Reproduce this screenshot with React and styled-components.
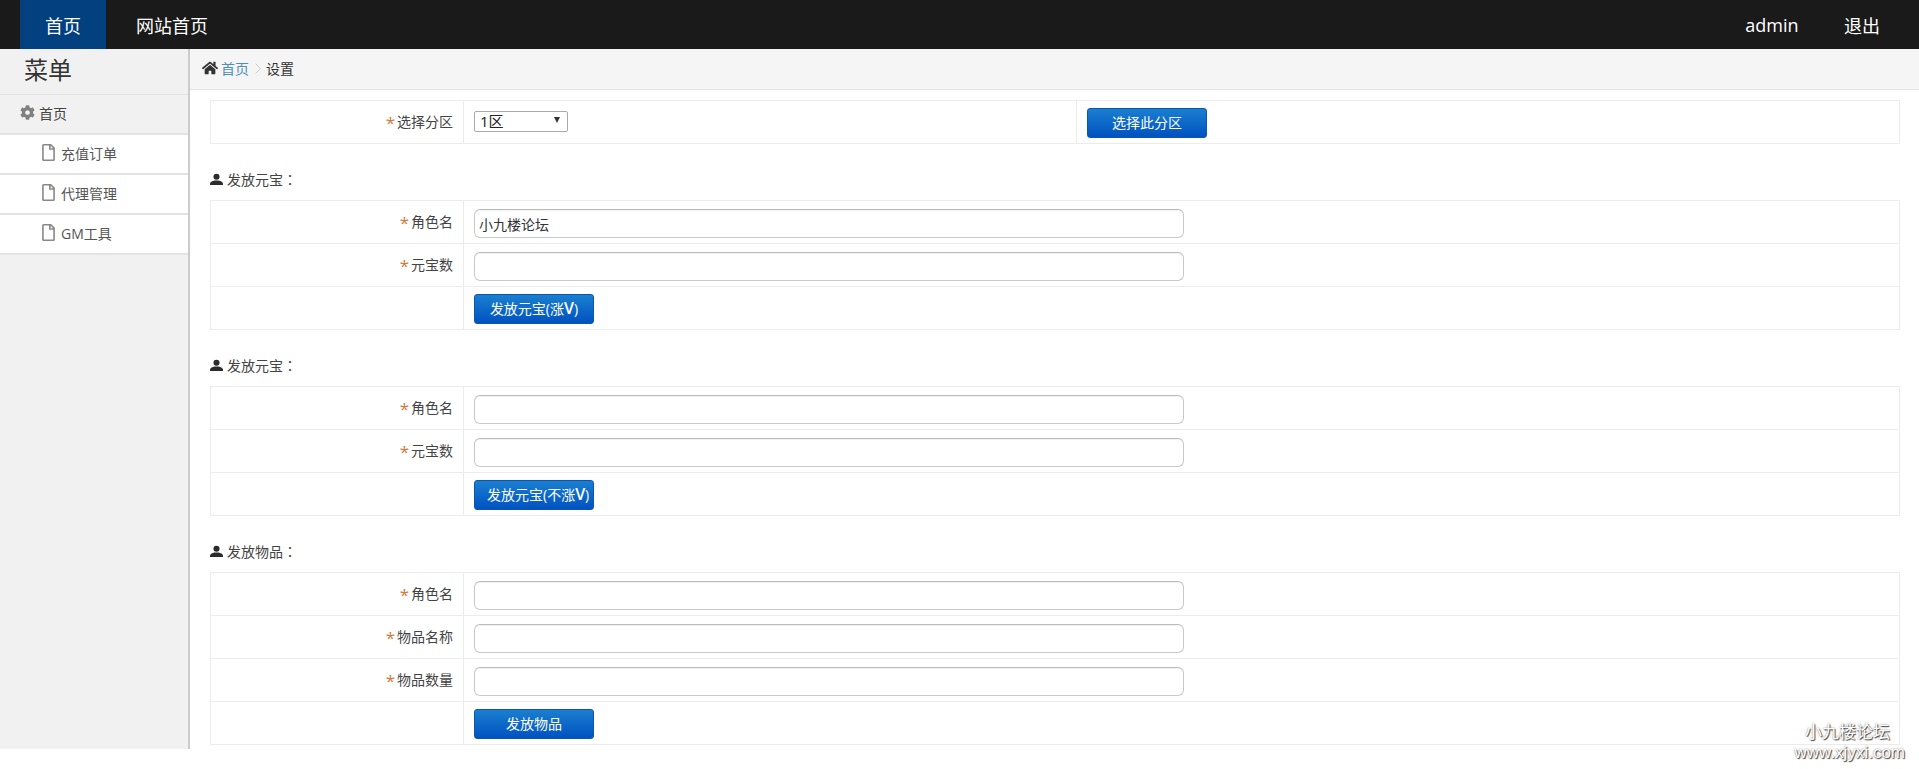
import styled, { createGlobalStyle } from "styled-components";
import { FaCog, FaHome, FaRegFile } from "react-icons/fa";

const cjk = `"Open Sans", "Noto Sans CJK SC", sans-serif`;

const GlobalStyle = createGlobalStyle`
  html, body {
    margin: 0;
    padding: 0;
    background: #fff;
    overflow: hidden;
  }
  * {
    box-sizing: border-box;
  }
  body {
    font-family: ${cjk};
    font-size: 14px;
    color: #333;
  }
`;

const Page = styled.div`
  position: relative;
  width: 1919px;
  height: 769px;
  overflow: hidden;
`;

const TopBar = styled.header`
  display: flex;
  align-items: stretch;
  height: 49px;
  padding: 0 39px 0 20px;
  background: #1a1a1a;
`;

const NavItem = styled.a`
  display: flex;
  align-items: center;
  justify-content: center;
  width: ${(p) => p.$width}px;
  margin-left: ${(p) => p.$gap || 0}px;
  background: ${(p) => (p.$active ? "#03407f" : "transparent")};
  color: #fff;
  font-size: 18px;
`;

const Spacer = styled.div`
  flex: 1;
`;

const Body = styled.div`
  display: flex;
  align-items: flex-start;
`;

const Sidebar = styled.aside`
  flex: none;
  width: 190px;
  height: 700px;
  background: #f1f1f1;
  border-right: 2px solid #ccc;
`;

const MenuTitle = styled.h2`
  height: 46px;
  margin: 0;
  padding-left: 24px;
  border-bottom: 1px solid #e2e2e2;
  font-size: 24px;
  font-weight: 400;
  line-height: 42px;
  color: #333;
`;

const MenuHead = styled.div`
  display: flex;
  align-items: center;
  gap: 4px;
  height: 40px;
  padding: 0 0 3px 20px;
  border-bottom: 2px solid #e3e3e3;
  color: #444;
  svg {
    font-size: 15px;
    color: #808080;
  }
`;

const MenuItem = styled.a`
  display: flex;
  align-items: center;
  gap: 4px;
  height: 40px;
  padding: 0 0 3px 40px;
  background: #fff;
  border-bottom: 2px solid #e3e3e3;
  color: #555;
  svg {
    font-size: 17px;
    color: #888;
  }
`;

const Main = styled.main`
  flex: 1;
  min-width: 0;
`;

const Crumbs = styled.nav`
  display: flex;
  align-items: center;
  height: 41px;
  padding: 0 0 2px 12px;
  background: #f5f5f5;
  border-bottom: 1px solid #e4e4e4;
  color: #333;
  > svg:first-child {
    font-size: 16px;
    color: #333;
    margin-right: 3px;
  }
`;

const CrumbLink = styled.a`
  color: #4d8fb8;
`;

const CrumbSep = styled.svg`
  width: 6px;
  height: 11px;
  margin: 0 5px 0 6px;
  fill: none;
  stroke: #ccc;
`;

const Content = styled.div`
  padding: 10px 19px 0 20px;
`;

const Table = styled.div`
  background: #fff;
  border: 1px solid #ececec;
`;

const Row = styled.div`
  display: grid;
  grid-template-columns: ${(p) => (p.$triple ? "253px 612px 1fr" : "253px 1fr")};
  height: 42px;
  & + & {
    height: 43px;
    border-top: 1px solid #ececec;
  }
`;

const LabelCell = styled.div`
  display: flex;
  align-items: center;
  justify-content: flex-end;
  gap: 2px;
  padding: 0 10px 2px 0;
  border-right: 1px solid #ececec;
  color: #444;
`;

const Star = styled.span`
  color: #d2793a;
  font-size: 17px;
  line-height: 1;
  padding-top: 3px;
`;

const FieldCell = styled.div`
  display: flex;
  align-items: center;
  padding: 2px 0 0 10px;
  & + & {
    border-left: 1px solid #ececec;
  }
`;

const Select = styled.div`
  display: flex;
  align-items: center;
  justify-content: space-between;
  width: 94px;
  height: 21px;
  padding: 0 7px 0 5px;
  background: #fff;
  border: 1px solid #aaa;
  border-radius: 2px;
  color: #222;
  font-size: 15px;
  line-height: 17px;
  margin-bottom: 3px;
`;

const Caret = styled.span`
  width: 0;
  height: 0;
  border-left: 3.5px solid transparent;
  border-right: 3.5px solid transparent;
  border-top: 6px solid #333;
  margin-bottom: 3px;
`;

const Input = styled.input`
  display: block;
  width: 710px;
  height: 29px;
  margin-top: 1px;
  padding: 0 4px;
  background: #fff;
  border: 1px solid #c9c9c9;
  border-top-color: #bbb;
  border-radius: 6px;
  box-shadow: inset 0 1px 1px rgba(0, 0, 0, 0.06);
  color: #333;
  font-family: ${cjk};
  font-size: 14px;
  outline: none;
`;

const Button = styled.button`
  display: block;
  width: 120px;
  height: 30px;
  padding: 0 12px 2px;
  border: 1px solid #0a57b0;
  border-radius: 3px;
  background: linear-gradient(to bottom, #1a7fd0 0%, #0052c0 100%);
  color: #fff;
  font-family: ${cjk};
  font-size: 14px;
  white-space: nowrap;
  overflow: hidden;
`;

const Bold = styled.b`
  font-size: 16px;
  font-weight: 600;
`;

const Heading = styled.div`
  display: flex;
  align-items: center;
  gap: 4px;
  height: 56px;
  padding-top: 14px;
  color: #444;
  font-size: 14px;
  svg {
    width: 13px;
    height: 13px;
    fill: #2b2b2b;
  }
`;

const Colon = styled.span`
  font-family: "Noto Sans CJK TC", sans-serif;
  margin-left: -4px;
`;

const Watermark = styled.div`
  position: absolute;
  right: 14px;
  bottom: 6px;
  text-align: right;
  color: #fff;
  font-family: "Liberation Sans", "Noto Sans CJK SC", sans-serif;
  font-size: 17px;
  line-height: 20px;
  text-shadow: 1px 1px 1px #444, 0 0 2px #777;
`;

const WatermarkName = styled.div`
  padding-right: 15px;
`;

const PersonIcon = () => (
  <svg viewBox="0 0 14 14">
    <circle cx="7" cy="4" r="3.3" />
    <path d="M0 13v-1.6c0-1.6 3-2.7 4.6-3.2h4.8c1.6.5 4.6 1.6 4.6 3.2V13z" />
  </svg>
);

const SectionTitle = ({ children }) => (
  <Heading>
    <PersonIcon />
    {children}
    <Colon>：</Colon>
  </Heading>
);

const FormRow = ({ label, value }) => (
  <Row>
    <LabelCell>
      <Star>*</Star>
      {label}
    </LabelCell>
    <FieldCell>
      <Input defaultValue={value} />
    </FieldCell>
  </Row>
);

const ButtonRow = ({ children }) => (
  <Row>
    <LabelCell />
    <FieldCell>
      <Button>{children}</Button>
    </FieldCell>
  </Row>
);

export default function App() {
  return (
    <Page>
      <GlobalStyle />
      <TopBar>
        <NavItem $active $width={86}>首页</NavItem>
        <NavItem $width={72} $gap={30}>网站首页</NavItem>
        <Spacer />
        <NavItem $width={56}>admin</NavItem>
        <NavItem $width={36} $gap={44}>退出</NavItem>
      </TopBar>

      <Body>
        <Sidebar>
          <MenuTitle>菜单</MenuTitle>
          <MenuHead>
            <FaCog />
            首页
          </MenuHead>
          {["充值订单", "代理管理", "GM工具"].map((name) => (
            <MenuItem key={name}>
              <FaRegFile />
              {name}
            </MenuItem>
          ))}
        </Sidebar>

        <Main>
          <Crumbs>
            <FaHome />
            <CrumbLink>首页</CrumbLink>
            <CrumbSep viewBox="0 0 6 11">
              <path d="M.5.5l5 5-5 5" />
            </CrumbSep>
            设置
          </Crumbs>
          <Content>
            <Table>
              <Row $triple>
                <LabelCell>
                  <Star>*</Star>
                  选择分区
                </LabelCell>
                <FieldCell>
                  <Select>
                    1区
                    <Caret />
                  </Select>
                </FieldCell>
                <FieldCell>
                  <Button>选择此分区</Button>
                </FieldCell>
              </Row>
            </Table>

            <SectionTitle>发放元宝</SectionTitle>
            <Table>
              <FormRow label="角色名" value="小九楼论坛" />
              <FormRow label="元宝数" />
              <ButtonRow>
                发放元宝(涨<Bold>V</Bold>)
              </ButtonRow>
            </Table>

            <SectionTitle>发放元宝</SectionTitle>
            <Table>
              <FormRow label="角色名" />
              <FormRow label="元宝数" />
              <ButtonRow>
                发放元宝(不涨<Bold>V</Bold>)
              </ButtonRow>
            </Table>

            <SectionTitle>发放物品</SectionTitle>
            <Table>
              <FormRow label="角色名" />
              <FormRow label="物品名称" />
              <FormRow label="物品数量" />
              <ButtonRow>发放物品</ButtonRow>
            </Table>
          </Content>
        </Main>
      </Body>

      <Watermark>
        <WatermarkName>小九楼论坛</WatermarkName>
        www.xjyxi.com
      </Watermark>
    </Page>
  );
}
